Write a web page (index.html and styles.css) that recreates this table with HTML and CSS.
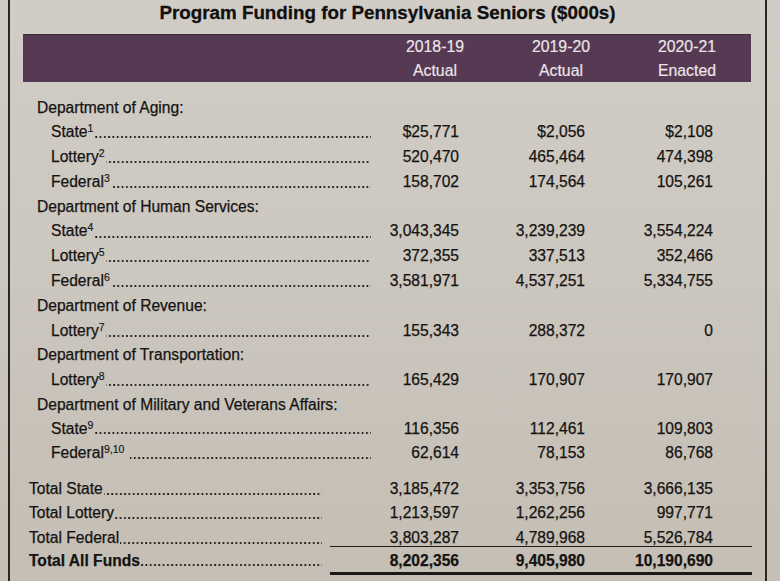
FILE: index.html
```html
<!DOCTYPE html>
<html lang="en">
<head>
<meta charset="utf-8">
<title>Program Funding for Pennsylvania Seniors</title>
<link rel="stylesheet" href="styles.css">
</head>
<body>
<div class="page">
  <h1 class="title">Program Funding for Pennsylvania Seniors ($000s)</h1>
  <div class="bar">
    <div class="bar-spacer"></div>
    <div class="bar-col">2018-19<br>Actual</div>
    <div class="bar-col">2019-20<br>Actual</div>
    <div class="bar-col">2020-21<br>Enacted</div>
  </div>

  <div class="body">
    <div class="row dept"><span class="label">Department of Aging:</span></div>
    <div class="row item"><div class="cell"><span class="label">State<sup>1</sup></span><span class="lead"></span></div><span class="num">$25,771</span><span class="num">$2,056</span><span class="num">$2,108</span></div>
    <div class="row item"><div class="cell"><span class="label">Lottery<sup>2</sup></span><span class="lead"></span></div><span class="num">520,470</span><span class="num">465,464</span><span class="num">474,398</span></div>
    <div class="row item"><div class="cell"><span class="label">Federal<sup>3</sup></span><span class="lead"></span></div><span class="num">158,702</span><span class="num">174,564</span><span class="num">105,261</span></div>

    <div class="row dept"><span class="label">Department of Human Services:</span></div>
    <div class="row item"><div class="cell"><span class="label">State<sup>4</sup></span><span class="lead"></span></div><span class="num">3,043,345</span><span class="num">3,239,239</span><span class="num">3,554,224</span></div>
    <div class="row item"><div class="cell"><span class="label">Lottery<sup>5</sup></span><span class="lead"></span></div><span class="num">372,355</span><span class="num">337,513</span><span class="num">352,466</span></div>
    <div class="row item"><div class="cell"><span class="label">Federal<sup>6</sup></span><span class="lead"></span></div><span class="num">3,581,971</span><span class="num">4,537,251</span><span class="num">5,334,755</span></div>

    <div class="row dept"><span class="label">Department of Revenue:</span></div>
    <div class="row item"><div class="cell"><span class="label">Lottery<sup>7</sup></span><span class="lead"></span></div><span class="num">155,343</span><span class="num">288,372</span><span class="num">0</span></div>

    <div class="row dept"><span class="label">Department of Transportation:</span></div>
    <div class="row item"><div class="cell"><span class="label">Lottery<sup>8</sup></span><span class="lead"></span></div><span class="num">165,429</span><span class="num">170,907</span><span class="num">170,907</span></div>

    <div class="row dept tight"><span class="label">Department of Military and Veterans Affairs:</span></div>
    <div class="row item tight"><div class="cell"><span class="label">State<sup>9</sup></span><span class="lead"></span></div><span class="num">116,356</span><span class="num">112,461</span><span class="num">109,803</span></div>
    <div class="row item tight"><div class="cell"><span class="label">Federal<sup>9,10</sup></span><span class="lead spaced"></span></div><span class="num">62,614</span><span class="num">78,153</span><span class="num">86,768</span></div>
  </div>

  <div class="totals">
    <div class="row total"><div class="cell"><span class="label">Total State</span><span class="lead"></span></div><span class="num">3,185,472</span><span class="num">3,353,756</span><span class="num">3,666,135</span></div>
    <div class="row total"><div class="cell"><span class="label">Total Lottery</span><span class="lead"></span></div><span class="num">1,213,597</span><span class="num">1,262,256</span><span class="num">997,771</span></div>
    <div class="row total"><div class="cell"><span class="label">Total Federal</span><span class="lead"></span></div><span class="num">3,803,287</span><span class="num">4,789,968</span><span class="num">5,526,784</span></div>
    <div class="rule-thin"></div>
    <div class="row total grand"><div class="cell"><span class="label">Total All Funds</span><span class="lead"></span></div><span class="num">8,202,356</span><span class="num">9,405,980</span><span class="num">10,190,690</span></div>
    <div class="rule-thick"></div>
  </div>
</div>
</body>
</html>
```

FILE: styles.css
```css
* { box-sizing: border-box; }

html, body {
  margin: 0;
  padding: 0;
  height: 100%;
}

body {
  background: linear-gradient(180deg, #d1cdc6 0%, #ccc7bf 45%, #c4beb4 100%);
  color: #151312;
  font-family: "Liberation Sans", Arial, sans-serif;
  font-size: 15.6px;
  overflow: hidden;
  -webkit-text-stroke: 0.25px #151312;
}

.page {
  margin-left: 8px;
  width: 759px;
  min-height: 100vh;
  border-left: 2px solid #2a2624;
  border-right: 2px solid #2a2624;
}

.title {
  margin: 0 0 8px 0;
  height: 26px;
  line-height: 26px;
  font-size: 18.8px;
  font-weight: bold;
  text-align: center;
  color: #111010;
  -webkit-text-stroke: 0.3px #111010;
}

.bar {
  margin: 0 14px 0 13px;
  height: 48px;
  background: #563953;
  display: grid;
  grid-template-columns: 349px 126px 126px 126px;
  padding-top: 1px;
  box-shadow: inset 0 1px 0 #3c2a3a;
}

.bar-col {
  text-align: center;
  line-height: 24px;
  color: #ebe4e8;
  font-size: 15.8px;
  -webkit-text-stroke: 0.2px #ebe4e8;
}

.body {
  padding-top: 13.5px;
}

.row {
  display: grid;
  grid-template-columns: 363px 86px 126px 128px;
  height: 24.8px;
  line-height: 24.8px;
  white-space: nowrap;
}

.row.tight {
  height: 24.1px;
  line-height: 24.1px;
}

.row.dept {
  display: block;
  padding-left: 27px;
}

.cell {
  display: flex;
  min-width: 0;
}

.item .cell {
  padding-left: 41px;
  padding-right: 2px;
}

.label {
  flex: none;
}

.lead {
  flex: 1 1 0;
  min-width: 0;
  margin-left: 1px;
  background-image: radial-gradient(circle at 1.1px 1.1px, #1f1c1b 0, #1f1c1b 0.8px, rgba(31, 28, 27, 0) 1.25px);
  background-size: 4.3px 2.2px;
  background-repeat: repeat-x;
  background-position: right 0.5px bottom 6.6px;
}

.lead.spaced {
  margin-left: 6px;
}

.num {
  text-align: right;
}

sup {
  font-size: 10.5px;
  line-height: 0;
  vertical-align: 5px;
  -webkit-text-stroke: 0.15px #151312;
}

.totals {
  padding-top: 11.5px;
}

.row.total {
  height: 24.4px;
  line-height: 24.4px;
}

.total .cell {
  padding-left: 19px;
  padding-right: 51px;
}

.total .lead {
  background-position: right 0.5px bottom 6.3px;
}

.rule-thin {
  margin: -4px 13px 0 320px;
  border-top: 1.5px solid #1c1a19;
}

.row.total.grand {
  height: 23px;
  line-height: 23px;
  margin-top: 1.5px;
  font-weight: bold;
}

.grand .lead {
  background-position: right 0.5px bottom 5.4px;
}

.rule-thick {
  margin: 0 13px 0 320px;
  border-top: 3px solid #1c1a19;
}
```
